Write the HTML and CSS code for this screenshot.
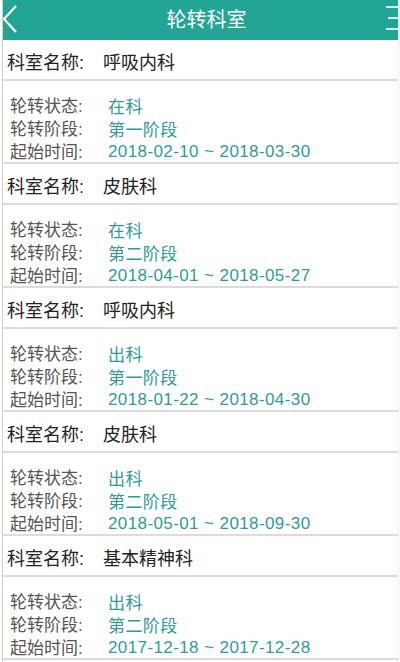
FILE: index.html
```html
<!DOCTYPE html>
<html lang="zh-CN">
<head>
    <meta charset="UTF-8">
    <meta name="viewport" content="width=device-width, initial-scale=1.0">
    <title>轮转科室</title>
    <link rel="stylesheet" href="styles.css">
</head>
<body>
    <div class="page">
        <header class="top-bar">
            <svg class="back" width="18" height="40" viewBox="0 0 18 40">
                <polyline points="13,6 1,19 13,32" fill="none" stroke="#fff" stroke-width="2.2"/>
            </svg>
            <h1>轮转科室</h1>
            <svg class="menu" width="16" height="40" viewBox="0 0 16 40">
                <line x1="2" y1="7" x2="16" y2="7" stroke="#d6f2ee" stroke-width="2"/>
                <line x1="4" y1="18" x2="16" y2="18" stroke="#d6f2ee" stroke-width="2"/>
                <line x1="2" y1="29" x2="16" y2="29" stroke="#d6f2ee" stroke-width="2"/>
            </svg>
        </header>
        <div id="list"></div>
    </div>
    <script>
        const rows = [
            { name: '呼吸内科', state: '在科', stage: '第一阶段', time: '2018-02-10 ~ 2018-03-30' },
            { name: '皮肤科', state: '在科', stage: '第二阶段', time: '2018-04-01 ~ 2018-05-27' },
            { name: '呼吸内科', state: '出科', stage: '第一阶段', time: '2018-01-22 ~ 2018-04-30' },
            { name: '皮肤科', state: '出科', stage: '第二阶段', time: '2018-05-01 ~ 2018-09-30' },
            { name: '基本精神科', state: '出科', stage: '第二阶段', time: '2017-12-18 ~ 2017-12-28' }
        ];
        const list = document.getElementById('list');
        list.innerHTML = rows.map(r => `
            <div class="dept">
                <div class="dept-name"><span class="label">科室名称:</span><span>${r.name}</span></div>
                <div class="dept-info">
                    <div class="line"><span class="label">轮转状态:</span><span class="value">${r.state}</span></div>
                    <div class="line"><span class="label">轮转阶段:</span><span class="value">${r.stage}</span></div>
                    <div class="line"><span class="label">起始时间:</span><span class="value">${r.time}</span></div>
                </div>
            </div>`).join('');
    </script>
</body>
</html>
```

FILE: styles.css
```css
:root { --teal: #23a596; --value: #2f9c96; --line: #dcdcdc; }
body { margin: 0; font-family: "Liberation Sans", "Noto Sans CJK SC", sans-serif; background: #fff; overflow: hidden; }
.page { margin-left: 2px; border-left: 1px solid #cfcfcf; border-right: 1px solid #eee; margin-right: 1px; min-height: 662px; }
.top-bar { height: 40px; background: var(--teal); display: flex; align-items: center; justify-content: space-between; }
.top-bar h1 { margin: 0 0 4px; color: #fff; font-size: 20px; font-weight: normal; padding-left: 8px; }
.top-bar .back { display: block; }
.top-bar .menu { display: block; margin-right: -2px; }
.dept-name { border-bottom: 2px solid var(--line); display: flex; align-items: center; padding: 3px 0 0 4px; box-sizing: border-box; height: 41px; font-size: 18px; color: #222; }
.dept-name .label { width: 96px; }
.dept-info { border-bottom: 2px solid var(--line); padding: 12px 0 0 7px; }
.line { display: flex; align-items: center; height: 23px; }
.line .label { width: 98px; font-size: 17px; color: #555; }
.line .value { font-size: 17px; color: var(--value); padding-top: 2px; letter-spacing: 0.4px; }
```
